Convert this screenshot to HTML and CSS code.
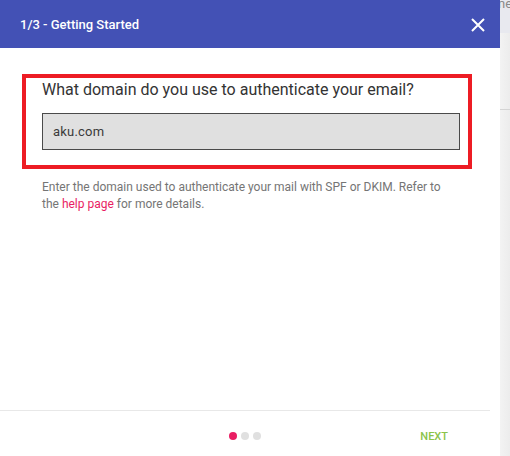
FILE: index.html
```html
<!DOCTYPE html>
<html>
<head>
<meta charset="utf-8">
<link rel="stylesheet" href="styles.css">
</head>
<body>
<div class="page">
  <div class="dialog">
    <div class="header">
      <span class="title">1/3 - Getting Started</span>
      <svg class="close" width="14" height="14" viewBox="0 0 14 14"><path d="M1 1 L13 13 M13 1 L1 13" stroke="#fff" stroke-width="2" fill="none"/></svg>
    </div>
    <div class="content">
      <div class="highlight">
        <div class="question">What domain do you use to authenticate your email?</div>
        <div class="input">aku.com</div>
      </div>
      <p class="help">Enter the domain used to authenticate your mail with SPF or DKIM. Refer to the <span class="link">help page</span> for more details.</p>
    </div>
    <div class="footer">
      <div class="dots"><span class="dot active"></span><span class="dot"></span><span class="dot"></span></div>
      <span class="next">NEXT</span>
    </div>
  </div>
  <div class="strip">
    <div class="strip-top"><span class="frag">ne</span></div>
    <div class="strip-body"></div>
  </div>
</div>
</body>
</html>
```

FILE: styles.css
```css
html, body {
  margin: 0;
  padding: 0;
  overflow: hidden;
  height: 456px;
}
body {
  font-family: Roboto, "Liberation Sans", sans-serif;
  background: #f0f0f0;
}
.page {
  display: flex;
  width: 510px;
  height: 456px;
}
.dialog {
  width: 500px;
  height: 461px;
  background: #fff;
  display: flex;
  flex-direction: column;
  flex-shrink: 0;
}
.header {
  height: 48px;
  background: #4351b5;
  display: flex;
  align-items: center;
  justify-content: space-between;
  padding: 0 15px 0 20px;
}
.title {
  color: #fff;
  font-size: 13px;
  font-weight: 500;
}
.close {
  display: block;
  margin-top: 1px;
}
.content {
  flex: 1;
  padding: 26px 0 0 22px;
}
.highlight {
  border: 4px solid #ed1c24;
  padding: 2px 8px 15px 16px;
  width: 418px;
}
.question {
  font-size: 16px;
  line-height: 20px;
  color: #333;
}
.input {
  margin-top: 13px;
  height: 35px;
  border: 1px solid #4a4a4a;
  background: #e0e0e0;
  padding: 0 10px;
  display: flex;
  align-items: center;
  font-size: 13px;
  letter-spacing: 0.2px;
  color: #3a3a3a;
}
.help {
  margin: 10px 0 0 20px;
  width: 405px;
  font-size: 12px;
  line-height: 17px;
  color: #757575;
}
.link {
  color: #e91e63;
}
.footer {
  width: 490px;
  height: 50px;
  border-top: 1px solid #e8e8e8;
  display: grid;
  grid-template-columns: 1fr auto 1fr;
  align-items: center;
}
.dots {
  grid-column: 2;
  display: flex;
  gap: 4px;
}
.dot {
  width: 8px;
  height: 8px;
  border-radius: 50%;
  background: #e0e0e0;
}
.dot.active {
  background: #e91e63;
}
.next {
  grid-column: 3;
  justify-self: end;
  margin-right: 42px;
  font-size: 11px;
  font-weight: 500;
  color: #8bc34a;
}
.strip {
  width: 10px;
  display: flex;
  flex-direction: column;
  overflow: hidden;
  background: linear-gradient(to right, #f3f3f3, #ececec);
}
.strip-top {
  height: 33px;
  background: #e8e9ef;
  overflow: hidden;
}
.frag {
  display: block;
  margin: -4px 0 0 -2px;
  font-size: 13px;
  line-height: 15px;
  color: #8a8a8a;
  white-space: nowrap;
}
.strip-body {
  height: 76px;
  border-bottom: 1px solid #d4d4d4;
}
```
